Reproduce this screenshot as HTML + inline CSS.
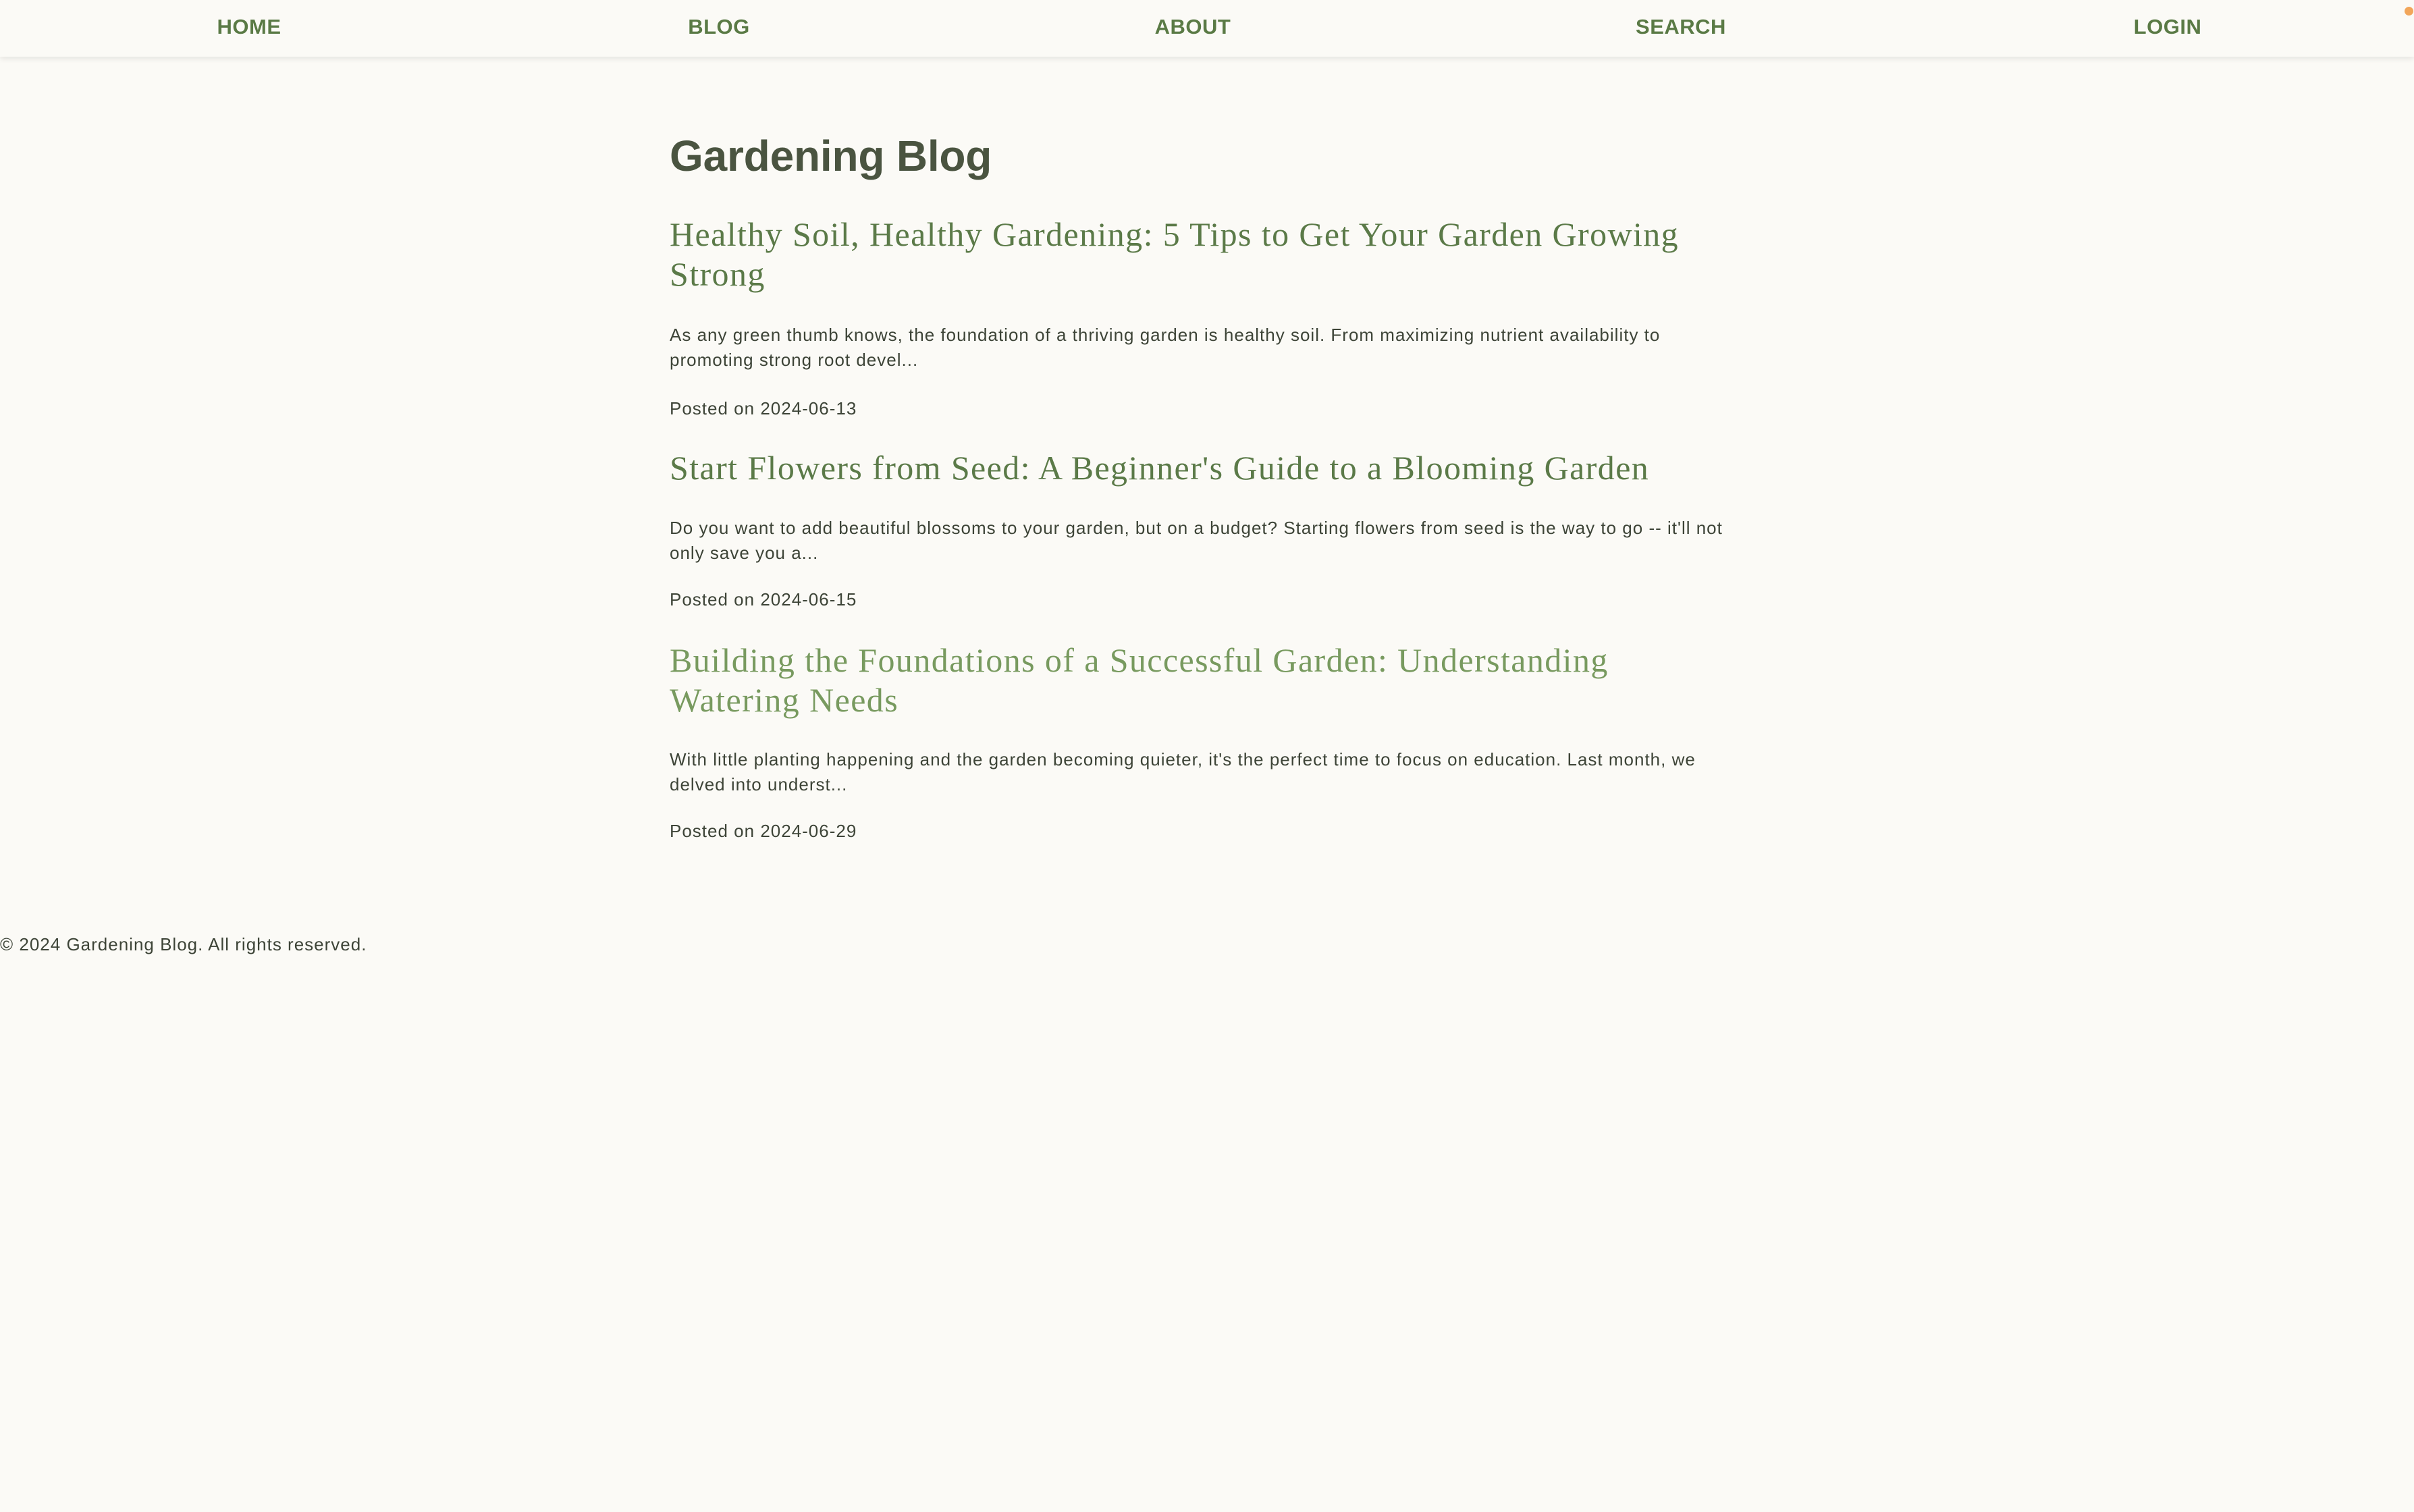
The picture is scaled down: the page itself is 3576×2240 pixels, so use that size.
<!DOCTYPE html>
<html><head><meta charset="utf-8"><style>
html,body{margin:0;padding:0;}
body{width:3576px;height:2240px;background:#fbfaf6;position:relative;overflow:hidden;font-family:"Liberation Sans",sans-serif;}
.nav{position:absolute;left:0;top:0;width:3576px;height:84px;background:#fbfaf6;box-shadow:0 3px 8px rgba(0,0,0,0.09);}
.nav a{position:absolute;top:0;line-height:80px;font-size:31px;font-weight:bold;color:#5a7a45;text-decoration:none;transform:translateX(-50%);letter-spacing:0.5px;}
.dot{position:absolute;left:3562px;top:10px;width:13px;height:13px;border-radius:50%;background:#f2a65a;}
.t{position:absolute;left:992px;white-space:nowrap;}
h1{margin:0;font-size:64px;line-height:80px;font-weight:bold;color:#4a5440;letter-spacing:-0.2px;}
.h{font-family:"Liberation Serif",serif;font-size:50px;line-height:59px;color:#5b7a48;letter-spacing:1.4px;}
.h.l{color:#789a5f;}
.p{font-size:26px;line-height:37px;color:#3d4437;letter-spacing:1px;}
</style></head><body>
<div class="nav">
<a style="left:369px">HOME</a>
<a style="left:1065px">BLOG</a>
<a style="left:1767px">ABOUT</a>
<a style="left:2490px">SEARCH</a>
<a style="left:3211px">LOGIN</a>
<div class="dot"></div>
</div>
<h1 class="t" style="top:191px">Gardening Blog</h1>
<div class="t h" style="top:318px">Healthy Soil, Healthy Gardening: 5 Tips to Get Your Garden Growing<br>Strong</div>
<div class="t p" style="top:478px">As any green thumb knows, the foundation of a thriving garden is healthy soil. From maximizing nutrient availability to<br>promoting strong root devel...</div>
<div class="t p" style="top:587px">Posted on 2024-06-13</div>
<div class="t h" style="top:664px">Start Flowers from Seed: A Beginner's Guide to a Blooming Garden</div>
<div class="t p" style="top:764px">Do you want to add beautiful blossoms to your garden, but on a budget? Starting flowers from seed is the way to go -- it'll not<br>only save you a...</div>
<div class="t p" style="top:870px">Posted on 2024-06-15</div>
<div class="t h l" style="top:949px">Building the Foundations of a Successful Garden: Understanding<br>Watering Needs</div>
<div class="t p" style="top:1107px">With little planting happening and the garden becoming quieter, it's the perfect time to focus on education. Last month, we<br>delved into underst...</div>
<div class="t p" style="top:1213px">Posted on 2024-06-29</div>
<div class="t p" style="left:0;top:1381px">© 2024 Gardening Blog. All rights reserved.</div>
</body></html>
